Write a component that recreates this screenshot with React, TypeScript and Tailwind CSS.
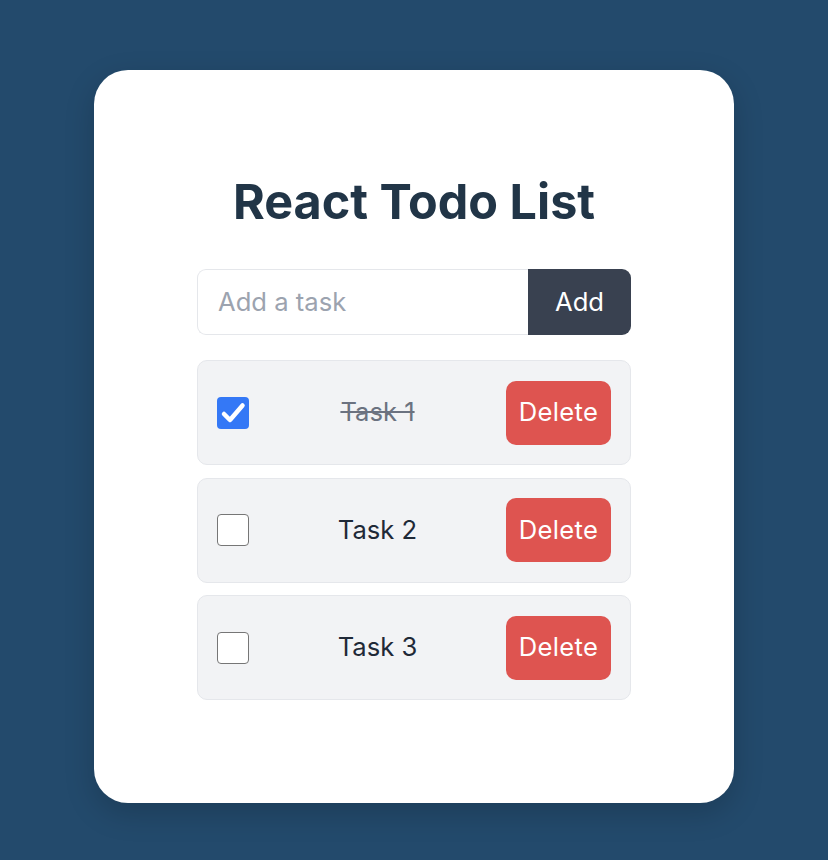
import { useState } from 'react';

interface Todo {
  id: number;
  text: string;
  done: boolean;
}

export default function App() {
  const [todos, setTodos] = useState<Todo[]>([
    { id: 1, text: 'Task 1', done: true },
    { id: 2, text: 'Task 2', done: false },
    { id: 3, text: 'Task 3', done: false },
  ]);
  const [input, setInput] = useState('');

  const addTodo = () => {
    if (!input.trim()) return;
    setTodos([...todos, { id: Date.now(), text: input.trim(), done: false }]);
    setInput('');
  };

  const toggle = (id: number) => {
    setTodos(todos.map((t) => (t.id === id ? { ...t, done: !t.done } : t)));
  };

  const remove = (id: number) => {
    setTodos(todos.filter((t) => t.id !== id));
  };

  return (
    <div
      className="min-h-screen bg-[#234a6c] pt-[70px] flex justify-center"
      style={{ fontFamily: 'Inter, "Noto Sans", sans-serif' }}
    >
      <div className="w-[640px] h-fit bg-white rounded-[34px] shadow-[0_10px_30px_rgba(0,0,0,0.18)] px-[103px] pt-[103px] pb-[103px]">
        <h1 className="text-center text-[48.5px] leading-[58px] font-bold text-[#213547]">
          React Todo List
        </h1>

        <div className="flex mt-[38px] h-[66px]">
          <input
            value={input}
            onChange={(e) => setInput(e.target.value)}
            placeholder="Add a task"
            className="flex-1 min-w-0 border border-[#e5e7eb] border-r-0 rounded-l-[9px] px-[20px] text-[25.6px] text-[#1f2937] placeholder-[#9ca3af] outline-none"
          />
          <button
            onClick={addTodo}
            className="w-[103px] bg-[#394150] text-white text-[25.6px] rounded-r-[9px]"
          >
            Add
          </button>
        </div>

        <ul className="mt-[25px] flex flex-col gap-[12.5px]">
          {todos.map((t) => (
            <li
              key={t.id}
              className="h-[105px] flex items-center justify-between px-[19px] bg-[#f2f3f5] border border-[#e5e7eb] rounded-[10px]"
            >
              <button
                onClick={() => toggle(t.id)}
                className={
                  t.done
                    ? 'w-[32px] h-[32px] rounded-[4px] bg-[#3478f6] flex items-center justify-center'
                    : 'w-[32px] h-[32px] rounded-[4px] bg-white border-[1.5px] border-[#767676]'
                }
              >
                {t.done && (
                  <svg width="26" height="26" viewBox="0 0 26 26" fill="none">
                    <path d="M4 14l6 6L22.5 5.5" stroke="white" strokeWidth="4.5" strokeLinecap="round" strokeLinejoin="round" />
                  </svg>
                )}
              </button>
              <span
                className={
                  t.done
                    ? 'text-[25.6px] text-[#6b7280] line-through'
                    : 'text-[25.6px] text-[#1f2937]'
                }
              >
                {t.text}
              </span>
              <button
                onClick={() => remove(t.id)}
                className="w-[105px] h-[64px] bg-[#de5450] text-white text-[25.6px] tracking-[0.3px] rounded-[10px]"
              >
                Delete
              </button>
            </li>
          ))}
        </ul>
      </div>
    </div>
  );
}
